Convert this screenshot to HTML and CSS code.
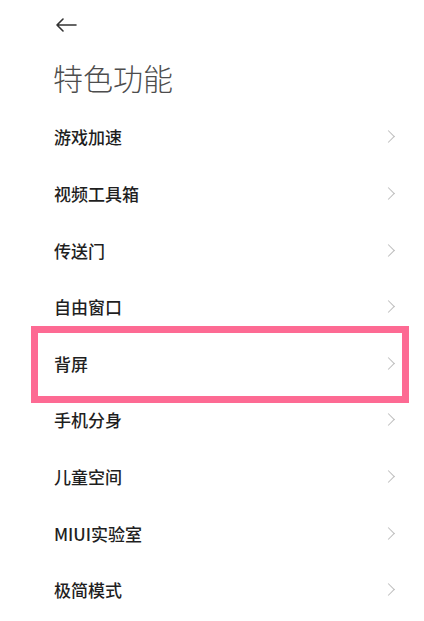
FILE: index.html
```html
<!DOCTYPE html>
<html lang="zh-CN">
<head>
<meta charset="utf-8">
<link rel="stylesheet" href="styles.css">
</head>
<body>
<div class="page">
  <header class="topbar">
    <svg class="back" width="22" height="14" viewBox="0 0 22 14" aria-hidden="true">
      <path d="M21 7H2M8 1L2 7l6 6" fill="none" stroke="#333" stroke-width="1.6" stroke-linecap="round" stroke-linejoin="round"/>
    </svg>
  </header>
  <h1 class="title">特色功能</h1>
  <ul class="list">
    <li class="row"><span>游戏加速</span><i class="chev"></i></li>
    <li class="row"><span>视频工具箱</span><i class="chev"></i></li>
    <li class="row"><span>传送门</span><i class="chev"></i></li>
    <li class="row"><span>自由窗口</span><i class="chev"></i></li>
    <li class="row"><span>背屏</span><i class="chev"></i></li>
    <li class="row"><span>手机分身</span><i class="chev"></i></li>
    <li class="row"><span>儿童空间</span><i class="chev"></i></li>
    <li class="row"><span>MIUI实验室</span><i class="chev"></i></li>
    <li class="row"><span>极简模式</span><i class="chev"></i></li>
  </ul>
  <div class="highlight"></div>
</div>
</body>
</html>
```

FILE: styles.css
```css
* { box-sizing: border-box; }
html, body { margin: 0; padding: 0; background: #fff; }
body {
  font-family: "Noto Sans CJK SC", "Noto Sans", sans-serif;
  width: 424px;
  height: 621px;
  overflow: hidden;
}
.page {
  position: relative;
  height: 621px;
  padding-left: 54px;
  padding-right: 28px;
}
.topbar {
  height: 50px;
  display: flex;
  align-items: center;
  padding-left: 1px;
}
.back { display: block; }
.title {
  margin: 7px 0 11.7px -1px;
  height: 40px;
  line-height: 40px;
  font-size: 30px;
  font-weight: 300;
  color: #4d4d4d;
  letter-spacing: 0;
}
.list {
  list-style: none;
  margin: 0;
  padding: 0;
}
.row {
  height: 56.6px;
  display: flex;
  align-items: center;
  justify-content: space-between;
  font-size: 17px;
  font-weight: 500;
  color: #1f1f1f;
}
.chev {
  width: 9px;
  height: 9px;
  border-top: 1.4px solid #bdbdbd;
  border-right: 1.4px solid #bdbdbd;
  transform: rotate(45deg);
  margin-right: 3px;
}
.highlight {
  position: absolute;
  left: 31px;
  top: 326px;
  width: 378px;
  height: 77px;
  border: 7px solid #fd6a93;
}
```
